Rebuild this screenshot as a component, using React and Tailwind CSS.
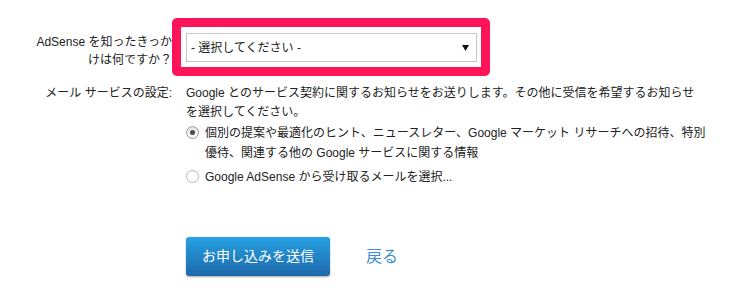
import { useState } from 'react';

const FONT = { fontFamily: '"Liberation Sans", "Noto Sans CJK JP", sans-serif' };

const Radio = ({ checked, onClick }) => (
  <span
    onClick={onClick}
    className={`mt-[3px] flex h-[13px] w-[13px] shrink-0 items-center justify-center rounded-full border ${
      checked ? 'border-[#9a9a9a] bg-gradient-to-b from-[#e4e4e4] to-[#fafafa]' : 'border-[#b8b8b8] bg-white'
    }`}
  >
    {checked && <span className="h-[5px] w-[5px] rounded-full bg-[#4a4a4a]" />}
  </span>
);

const App = () => {
  const [mail, setMail] = useState('all');

  return (
    <div className="h-[297px] w-[751px] bg-white pt-[18px] text-[12px] text-[#222]" style={FONT}>
      <div className="grid grid-cols-[172px_1fr] gap-x-[14px]">
        {/* Row: how did you hear */}
        <div className="pt-[15px] text-right leading-[18px] whitespace-nowrap">
          AdSense を知ったきっか
          <br />
          けは何ですか？
        </div>
        <div className="-ml-[14px] flex">
          <div className="rounded-[5px] border-[9px] border-[#ff145a] pt-[6px] pr-[4px] pb-[5px] pl-[5px]">
            <div className="flex h-[29px] w-[291px] items-center justify-between border border-[#c4c4c4] bg-white pr-[7px] pl-[4px]">
              <span className="whitespace-nowrap">- 選択してください -</span>
              <svg width="7" height="6" viewBox="0 0 7 6">
                <path d="M0 0h7L3.5 6z" fill="#111" />
              </svg>
            </div>
          </div>
        </div>

        {/* Row: mail settings */}
        <div className="mt-[8px] text-right leading-[19px] whitespace-nowrap">メール サービスの設定:</div>
        <div className="mt-[8px]">
          <p className="leading-[19px] whitespace-nowrap">
            Google とのサービス契約に関するお知らせをお送りします。その他に受信を希望するお知らせ
            <br />
            を選択してください。
          </p>

          <div className="mt-[1px] flex flex-col gap-[4px]">
            <label className="flex gap-[6px] leading-[20px]" onClick={() => setMail('all')}>
              <Radio checked={mail === 'all'} />
              <span className="whitespace-nowrap">
                個別の提案や最適化のヒント、ニュースレター、Google マーケット リサーチへの招待、特別
                <br />
                優待、関連する他の Google サービスに関する情報
              </span>
            </label>
            <label className="flex gap-[6px] leading-[20px]" onClick={() => setMail('custom')}>
              <Radio checked={mail === 'custom'} />
              <span className="whitespace-nowrap">Google AdSense から受け取るメールを選択...</span>
            </label>
          </div>

          <div className="mt-[50px] flex items-center gap-[36px]">
            <button className="h-[39px] rounded-[3px] bg-gradient-to-b from-[#25a1e2] to-[#1e69aa] px-[16px] text-[14px] text-white shadow-[0_1px_2px_rgba(0,0,0,0.35)]">
              お申し込みを送信
            </button>
            <a href="#" className="text-[16px] text-[#3a8fd2]">
              戻る
            </a>
          </div>
        </div>
      </div>
    </div>
  );
};

export default App;
